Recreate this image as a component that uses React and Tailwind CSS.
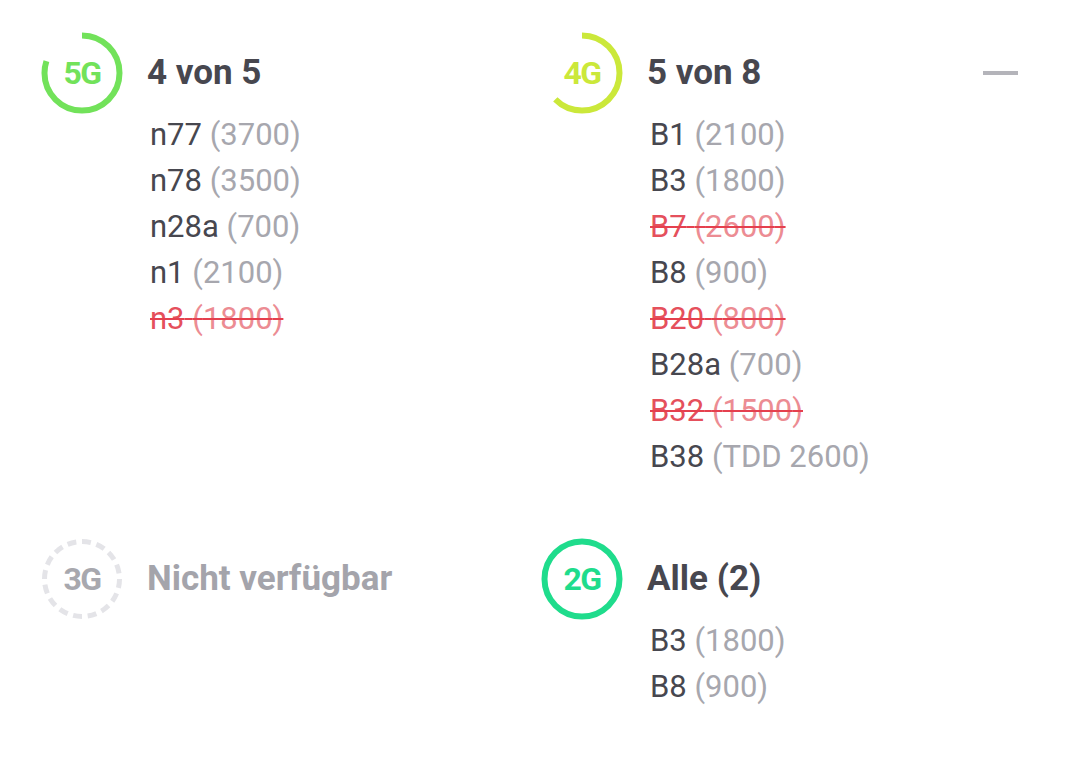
import React from 'react'

const bands = [
  {
    gen: '5G',
    color: '#72e25a',
    frac: 4 / 5,
    title: '4 von 5',
    items: [
      ['n77', '3700'],
      ['n78', '3500'],
      ['n28a', '700'],
      ['n1', '2100'],
      ['n3', '1800', true],
    ],
  },
  {
    gen: '4G',
    color: '#cbe83a',
    frac: 5 / 8,
    title: '5 von 8',
    collapse: true,
    items: [
      ['B1', '2100'],
      ['B3', '1800'],
      ['B7', '2600', true],
      ['B8', '900'],
      ['B20', '800', true],
      ['B28a', '700'],
      ['B32', '1500', true],
      ['B38', 'TDD 2600'],
    ],
  },
  {
    gen: '3G',
    color: '#e4e4e8',
    dashed: true,
    title: 'Nicht verfügbar',
    muted: true,
    items: [],
  },
  {
    gen: '2G',
    color: '#1fdc8c',
    frac: 1,
    title: 'Alle (2)',
    items: [
      ['B3', '1800'],
      ['B8', '900'],
    ],
  },
]

function Ring({ gen, color, frac, dashed }) {
  const r = 37.5
  const c = 2 * Math.PI * r
  return (
    <div className="relative w-[82px] h-[82px] shrink-0">
      <svg width="82" height="82" viewBox="0 0 82 82" className="absolute inset-0">
        {dashed ? (
          <circle cx="41" cy="41" r={r} fill="none" stroke={color} strokeWidth="5" strokeDasharray="9 5.7" />
        ) : (
          <circle
            cx="41"
            cy="41"
            r={r}
            fill="none"
            stroke={color}
            strokeWidth="6"
            strokeDasharray={`${c * frac} ${c}`}
            transform="rotate(-90 41 41)"
          />
        )}
      </svg>
      <div
        className="absolute inset-0 flex items-center justify-center text-[32px] font-bold tracking-[-1.5px]"
        style={{ color: dashed ? '#a8a8ae' : color }}
      >
        {gen}
      </div>
    </div>
  )
}

function Band({ band }) {
  return (
    <div className="flex">
      <Ring {...band} />
      <div className="flex-1 ml-[24px]">
        <div className="h-[82px] flex items-center justify-between">
          <h2 className={`text-[35px] font-bold ${band.muted ? 'text-[#a4a4ab]' : 'text-[#47474f]'}`}>
            {band.title}
          </h2>
          {band.collapse && <div className="w-[35px] h-[4px] bg-[#b4b4ba] mr-[20px]" />}
        </div>
        {band.items.length > 0 && (
          <ul className="mt-[-2px] ml-[3px]">
            {band.items.map(([name, freq, off]) => (
              <li key={name} className="h-[46px] leading-[46px] text-[31px]">
                {off ? (
                  <span className="line-through decoration-[#e5404e] decoration-2">
                    <span className="text-[#e5505c]">{name}</span>{' '}
                    <span className="text-[#ec8c93]">({freq})</span>
                  </span>
                ) : (
                  <>
                    <span className="text-[#47474f]">{name}</span>{' '}
                    <span className="text-[#a7a7ae]">({freq})</span>
                  </>
                )}
              </li>
            ))}
          </ul>
        )}
      </div>
    </div>
  )
}

export default function App() {
  return (
    <div className="w-[1079px] h-[767px] bg-white px-[41px] pt-[32px] font-['Roboto',sans-serif]">
      <div className="grid grid-cols-[500px_1fr] gap-y-[58px]">
        {bands.map(b => (
          <Band key={b.gen} band={b} />
        ))}
      </div>
    </div>
  )
}
